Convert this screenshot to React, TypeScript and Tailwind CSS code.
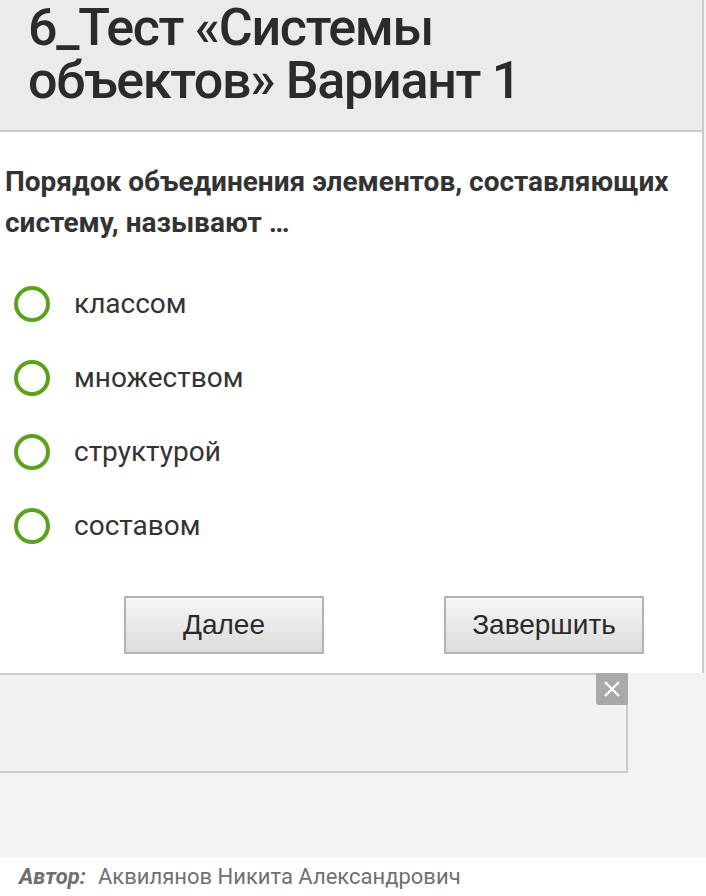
import React from "react";

const options = ["классом", "множеством", "структурой", "составом"];

export default function App() {
  return (
    <div className="w-[706px] h-[896px] bg-[#f3f3f3] overflow-hidden flex flex-col" style={{ fontFamily: "Roboto, 'Noto Sans', sans-serif" }}>
      <div className="w-[704px] h-[132px] shrink-0 bg-[#ebebeb] border-b-2 border-r-2 border-[#c9c9c9] pl-[28px] pt-[1px]">
        <h1 className="text-[52px] leading-[53px] font-medium text-[#2b2b2b] tracking-[-1.3px]">
          6_Тест «Системы
          <br />
          объектов» Вариант 1
        </h1>
      </div>
      <div className="w-[704px] h-[541px] shrink-0 bg-white border-r-2 border-[#c9c9c9] flex flex-col">
        <p className="pl-[5px] pt-[29px] text-[28px] leading-[41px] font-bold text-[#333]">
          Порядок объединения элементов, составляющих
          <br />
          систему, называют …
        </p>
        <div className="flex flex-col pt-[43px] gap-[38px] pl-[14px]">
          {options.map((o) => (
            <div key={o} className="flex items-center h-[36px]">
              <span className="w-[36px] h-[36px] rounded-full border-[4px] border-[#5ba11c] shrink-0" />
              <span className="ml-[24px] text-[28px] text-[#333]">{o}</span>
            </div>
          ))}
        </div>
        <div className="flex pt-[52px]">
          <button className="ml-[124px] w-[200px] h-[58px] border-2 border-[#b3b3b3] bg-gradient-to-b from-[#f7f7f7] to-[#dcdcdc] text-[28px] text-[#2a2a2a]" style={{ fontFamily: "'Liberation Sans', Arial, sans-serif" }}>
            Далее
          </button>
          <button className="ml-[120px] w-[200px] h-[58px] border-2 border-[#b3b3b3] bg-gradient-to-b from-[#f7f7f7] to-[#dcdcdc] text-[28px] text-[#2a2a2a]" style={{ fontFamily: "'Liberation Sans', Arial, sans-serif" }}>
            Завершить
          </button>
        </div>
      </div>
      <div className="relative w-[628px] h-[100px] shrink-0 bg-[#f2f2f2] border-2 border-l-0 border-[#cbcbcb]">
        <div className="absolute right-[-2px] top-[-2px] w-[32px] h-[32px] bg-[#a9a9a9] rounded-bl-[3px] flex items-center justify-center">
          <svg width="18" height="18" viewBox="0 0 18 18">
            <path d="M2 2 L16 16 M16 2 L2 16" stroke="#fff" strokeWidth="2.2" />
          </svg>
        </div>
      </div>
      <div className="h-[84px] shrink-0" />
      <div className="h-[39px] bg-white flex items-center pl-[19px] text-[22px] text-[#707070]">
        <span className="font-bold italic text-[#6f6f6f]">Автор:</span>
        <span className="ml-[12px]">Аквилянов Никита Александрович</span>
      </div>
    </div>
  );
}
